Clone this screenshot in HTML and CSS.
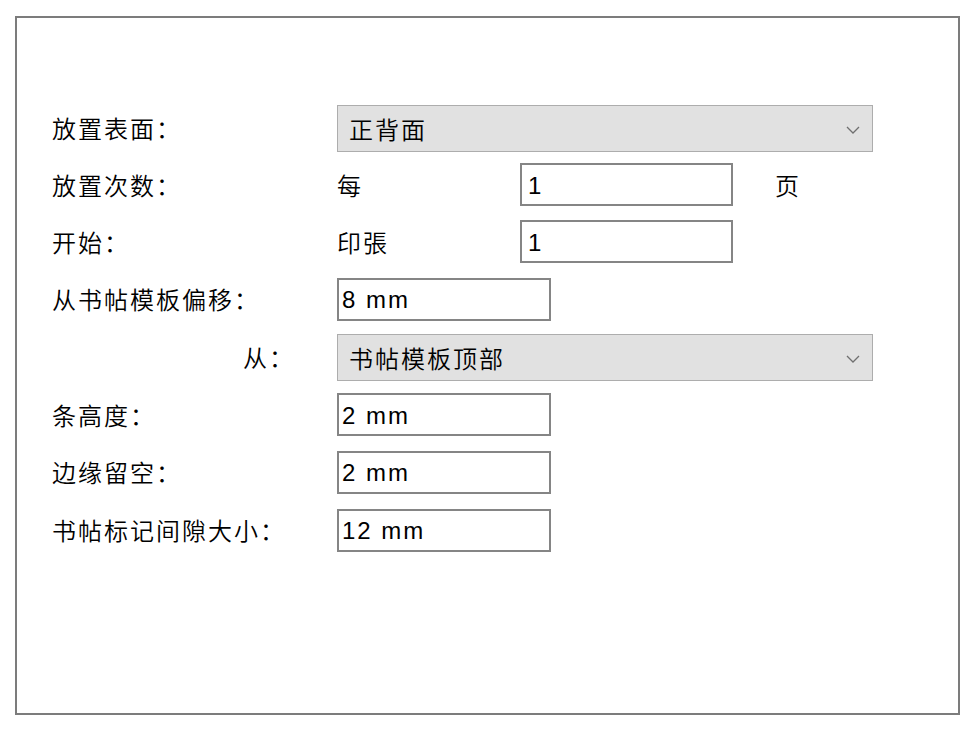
FILE: index.html
```html
<!DOCTYPE html>
<html lang="zh-CN">
<head>
<meta charset="utf-8">
<title>书帖标记</title>
<link rel="stylesheet" href="styles.css">
</head>
<body>
<div class="panel">
  <div class="form">
    <div class="label">放置表面：</div>
    <div class="ctrl">
      <div class="select-wrap wide">
        <select class="select"><option>正背面</option></select>
        <svg class="chev" width="14" height="8" viewBox="0 0 14 8"><path d="M1 1 L7 7 L13 1" fill="none" stroke="#6f6f6f" stroke-width="1.3"/></svg>
      </div>
    </div>

    <div class="label">放置次数：</div>
    <div class="ctrl">
      <span class="pre">每</span>
      <input class="field num" type="text" value="1">
      <span class="post">页</span>
    </div>

    <div class="label">开始：</div>
    <div class="ctrl">
      <span class="pre">印張</span>
      <input class="field num" type="text" value="1">
    </div>

    <div class="label">从书帖模板偏移：</div>
    <div class="ctrl"><input class="field" type="text" value="8 mm"></div>

    <div class="label right">从：</div>
    <div class="ctrl">
      <div class="select-wrap wide">
        <select class="select"><option>书帖模板顶部</option></select>
        <svg class="chev" width="14" height="8" viewBox="0 0 14 8"><path d="M1 1 L7 7 L13 1" fill="none" stroke="#6f6f6f" stroke-width="1.3"/></svg>
      </div>
    </div>

    <div class="label">条高度：</div>
    <div class="ctrl"><input class="field" type="text" value="2 mm"></div>

    <div class="label">边缘留空：</div>
    <div class="ctrl"><input class="field" type="text" value="2 mm"></div>

    <div class="label">书帖标记间隙大小：</div>
    <div class="ctrl"><input class="field" type="text" value="12 mm"></div>
  </div>
</div>
</body>
</html>
```
FILE: styles.css
```css
html, body {
  margin: 0;
  padding: 0;
  background: #ffffff;
}

body {
  font-family: "Noto Sans CJK SC", "Liberation Sans", sans-serif;
  color: #000;
}

.panel {
  box-sizing: border-box;
  margin: 16px 0 0 15px;
  width: 945px;
  height: 699px;
  border: 2px solid #7c7c7c;
  padding: 82px 0 0 35px;
}

.form {
  display: grid;
  grid-template-columns: 285px 1fr;
  grid-template-rows: 56px 57px 57px 58px 58px 57px 58px 58px;
  align-items: center;
}

.label {
  font-size: 24px;
  font-weight: 350;
  letter-spacing: 2px;
  line-height: 28px;
  white-space: nowrap;
}

.label.right {
  text-align: right;
  padding-right: 42px;
}

.ctrl {
  display: flex;
  align-items: center;
}

.pre {
  width: 183px;
  font-size: 24px;
  font-weight: 350;
  letter-spacing: 2px;
  line-height: 28px;
}

.post {
  margin-left: 42px;
  font-size: 24px;
  font-weight: 350;
  line-height: 28px;
}

.select-wrap {
  position: relative;
  width: 536px;
  height: 47px;
}

.select {
  -webkit-appearance: none;
  appearance: none;
  box-sizing: border-box;
  width: 100%;
  height: 100%;
  margin: 0;
  background: #e1e1e1;
  border: 1px solid #adadad;
  border-radius: 0;
  padding: 0 0 0 11px;
  font-family: "Noto Sans CJK SC", sans-serif;
  font-size: 24px;
  font-weight: 350;
  letter-spacing: 2px;
  color: #000;
  outline: none;
}

.chev {
  position: absolute;
  right: 13px;
  top: 21px;
}

.field {
  box-sizing: border-box;
  width: 214px;
  height: 43px;
  margin: 0;
  border: 2px solid #858585;
  border-radius: 0;
  background: #fff;
  padding: 2px 0 0 3px;
  font-family: "Liberation Sans", Arial, sans-serif;
  font-size: 24px;
  letter-spacing: 2px;
  color: #000;
  outline: none;
}

.field.num {
  width: 213px;
  padding-left: 6px;
}
```
